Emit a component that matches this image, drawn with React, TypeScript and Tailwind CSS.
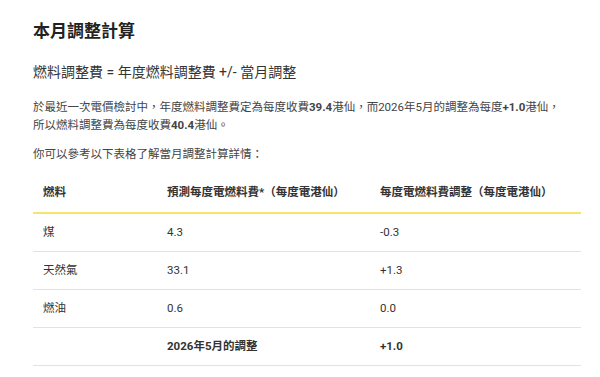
const rows = [
  { fuel: '煤', forecast: '4.3', adjust: '-0.3' },
  { fuel: '天然氣', forecast: '33.1', adjust: '+1.3' },
  { fuel: '燃油', forecast: '0.6', adjust: '0.0' },
]

const App = () => {
  return (
    <div className="w-[600px] h-[377px] overflow-hidden bg-white px-[33px] pt-[19px] text-[#333] font-['Roboto','Noto_Sans_CJK_TC',sans-serif]">
      <h2 className="text-[17px] leading-[24px] font-bold text-[#222]">本月調整計算</h2>
      <p className="mt-[19px] text-[14px] leading-[20px] text-[#333]">燃料調整費 = 年度燃料調整費 +/- 當月調整</p>
      <p className="mt-[16px] text-[11.5px] leading-[18px] text-[#444]">
        於最近一次電價檢討中，年度燃料調整費定為每度收費<b>39.4</b>港仙，而2026年5月的調整為每度<b>+1.0</b>港仙，所以燃料調整費為每度收費<b>40.4</b>港仙。
      </p>
      <p className="mt-[11px] text-[11.5px] leading-[18px] text-[#444]">你可以參考以下表格了解當月調整計算詳情：</p>

      <div className="mt-[11px] w-[548px] text-[11.5px] text-[#333]">
        <div className="grid grid-cols-[124px_213px_1fr] h-[40px] items-center border-b-2 border-[#f3e66b] font-bold">
          <div className="pl-[10px]">燃料</div>
          <div className="pl-[10px]">預測每度電燃料費*（每度電港仙）</div>
          <div className="pl-[10px]">每度電燃料費調整（每度電港仙）</div>
        </div>
        {rows.map((r) => (
          <div key={r.fuel} className="grid grid-cols-[124px_213px_1fr] h-[38px] items-center border-b border-[#e2e2e2]">
            <div className="pl-[10px]">{r.fuel}</div>
            <div className="pl-[10px]">{r.forecast}</div>
            <div className="pl-[10px]">{r.adjust}</div>
          </div>
        ))}
        <div className="grid grid-cols-[124px_213px_1fr] h-[38px] items-center border-b border-[#e2e2e2] font-bold">
          <div className="pl-[10px]"></div>
          <div className="pl-[10px]">2026年5月的調整</div>
          <div className="pl-[10px]">+1.0</div>
        </div>
      </div>
    </div>
  )
}

export default App
